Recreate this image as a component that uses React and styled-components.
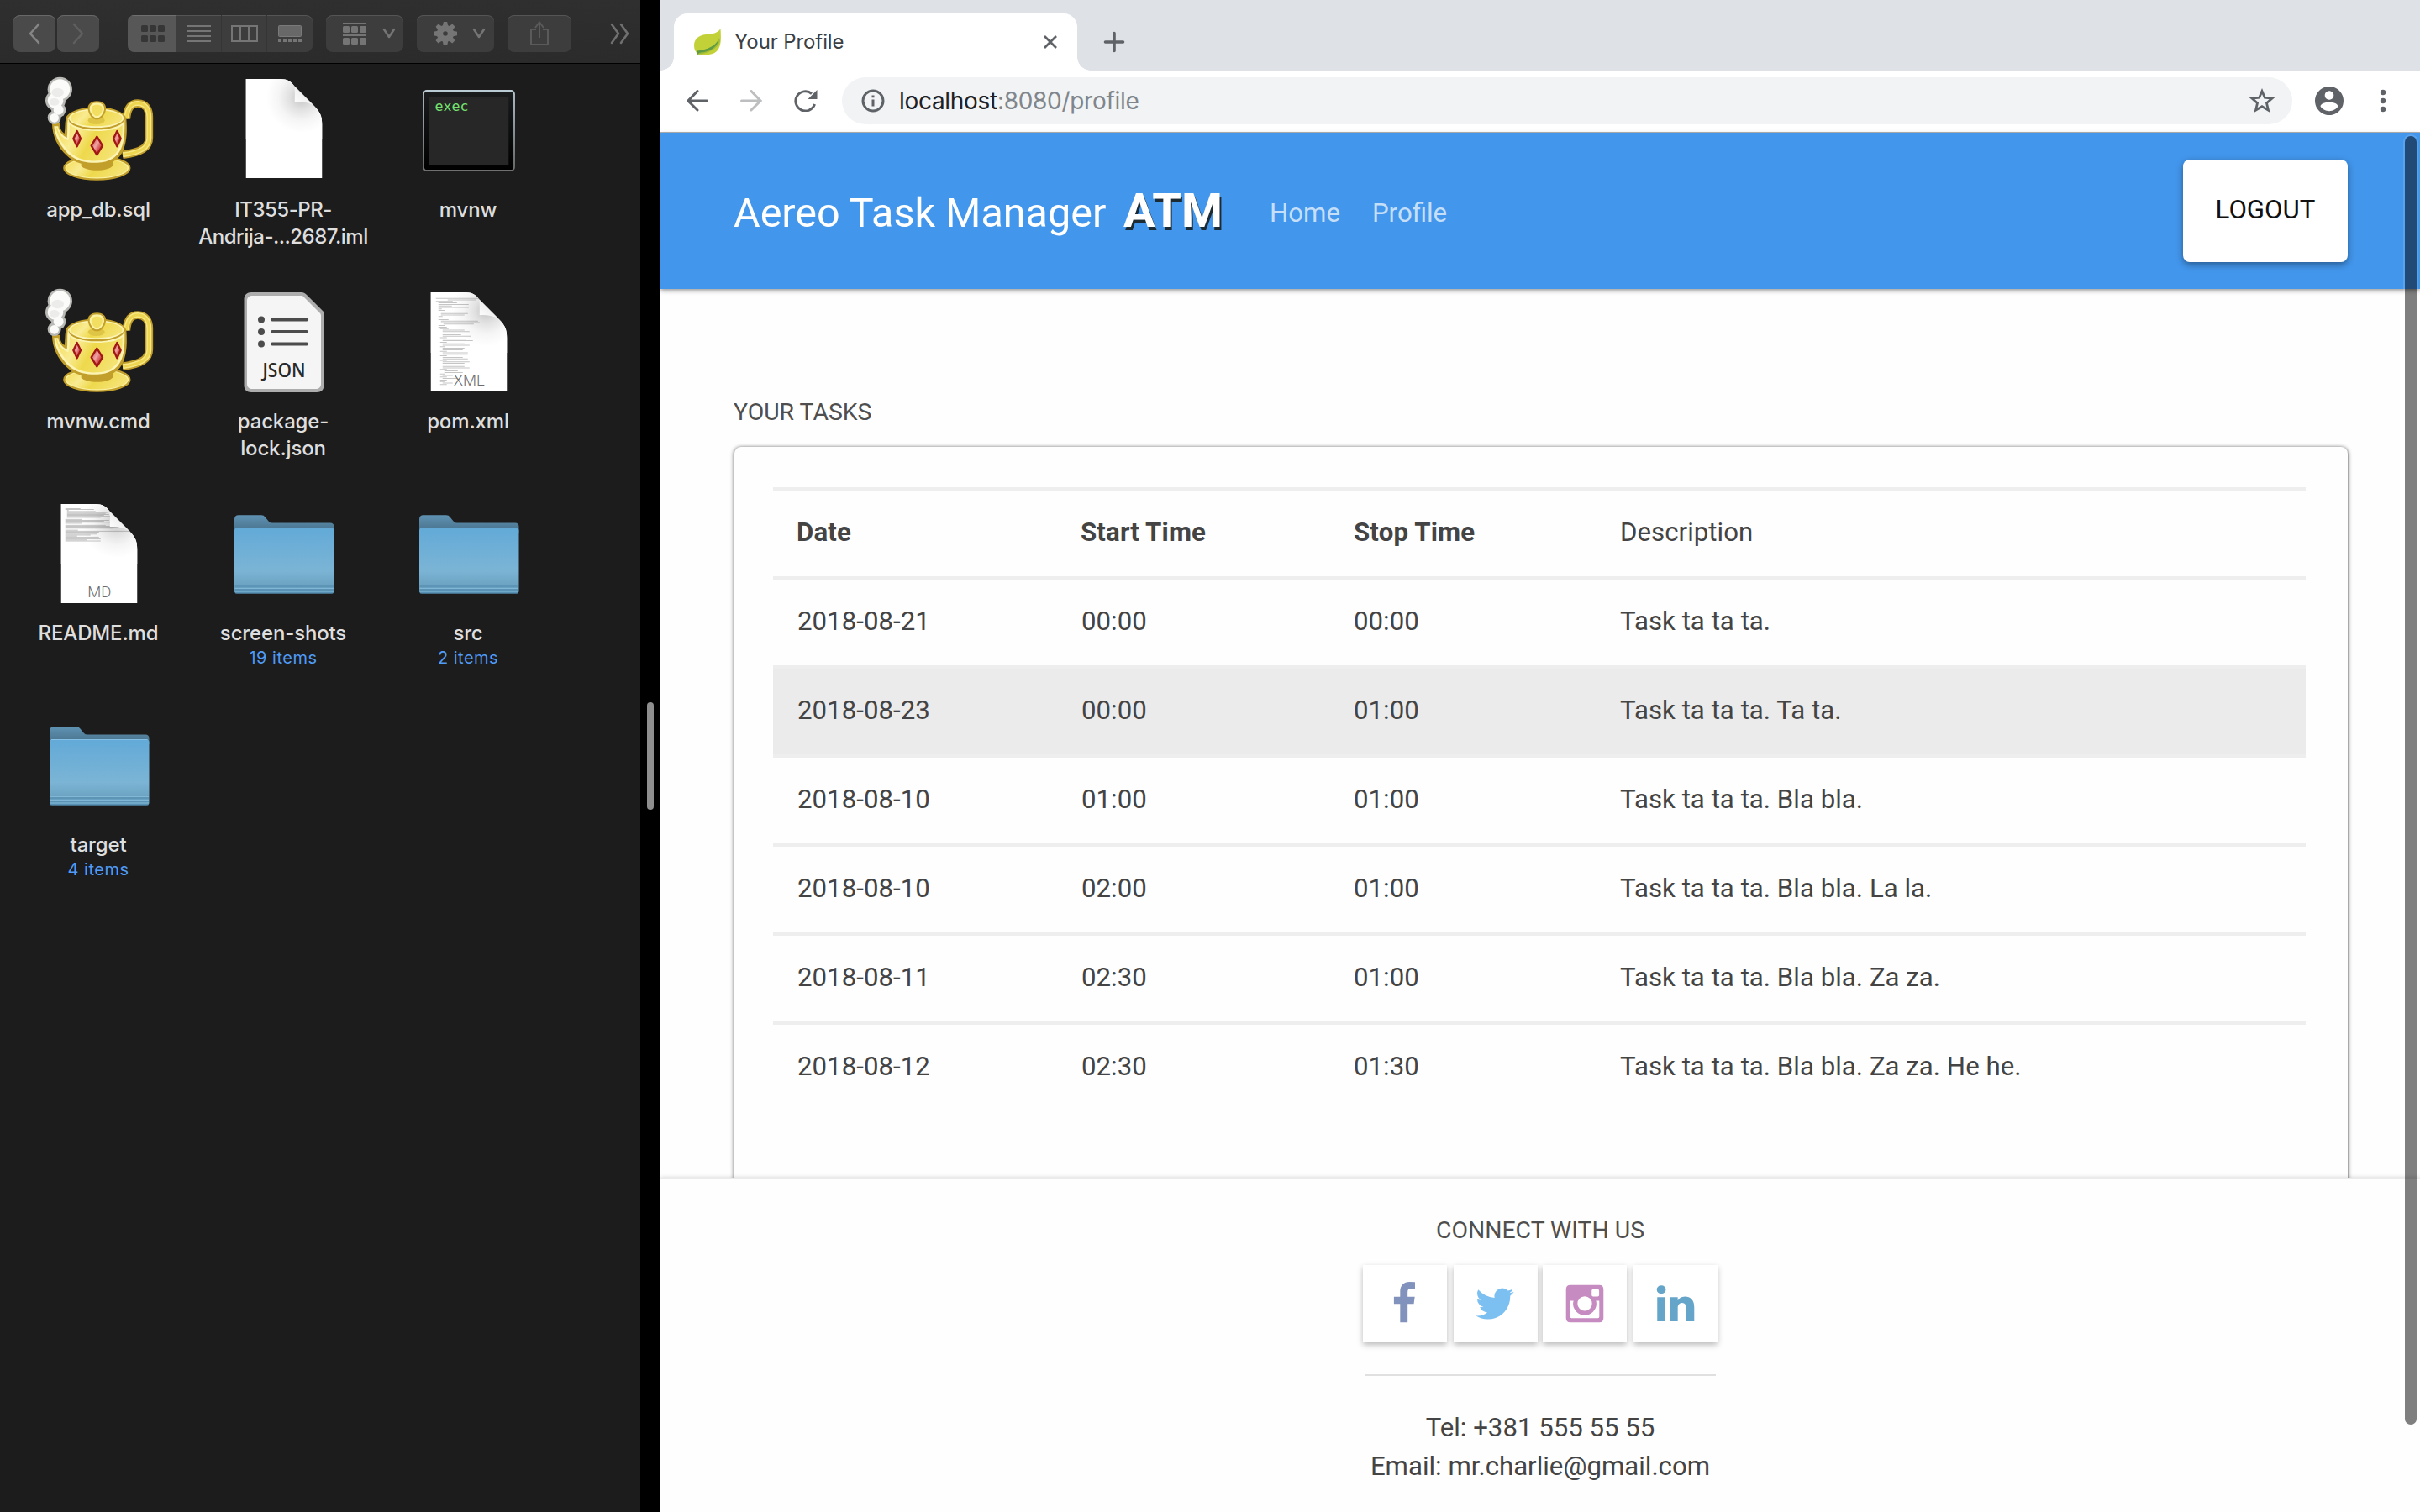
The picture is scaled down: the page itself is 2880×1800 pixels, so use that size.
import React from "react";
import styled, { createGlobalStyle, css } from "styled-components";

const SYSTEM = `Inter, "Liberation Sans", sans-serif`;
const ROBOTO = `Roboto, "Liberation Sans", sans-serif`;

const GlobalStyle = createGlobalStyle`
  *, *::before, *::after { box-sizing: border-box; }
  html, body { margin: 0; padding: 0; background: #000; }
  #root { width: 2880px; height: 1800px; overflow: hidden; }
`;

const Desktop = styled.div`
  display: flex;
  width: 2880px;
  height: 1800px;
  overflow: hidden;
  background: #000;
`;

/* ---------- Finder ---------- */

const Finder = styled.section`
  display: flex;
  flex-direction: column;
  width: 762px;
  background: #1c1c1c;
  font-family: ${SYSTEM};
`;

const FinderToolbar = styled.div`
  display: flex;
  align-items: center;
  height: 76px;
  padding: 5px 0 0 16px;
  background: linear-gradient(#2f2f2f, #2b2b2b);
  border-bottom: 1px solid #000;
`;

const ToolButton = styled.div`
  display: flex;
  align-items: center;
  justify-content: center;
  width: ${(p) => p.$w}px;
  height: 44px;
  margin-left: ${(p) => p.$gap || 0}px;
  padding-left: ${(p) => p.$shift || 0}px;
  border-radius: 8px;
  background: ${(p) => (p.$bright ? "#4a4a4a" : "#3d3d3d")};
  box-shadow: inset 0 1px 0 ${(p) => (p.$bright ? "#686868" : "#555")};
`;

const Segments = styled.div`
  display: flex;
  width: 220px;
  height: 44px;
  margin-left: 34px;
  border-radius: 8px;
  overflow: hidden;
  background: #3d3d3d;
  box-shadow: inset 0 1px 0 #555;
`;

const Segment = styled.div`
  display: flex;
  align-items: center;
  justify-content: center;
  width: ${(p) => p.$w}px;
  border-left: ${(p) => (p.$divider ? "1px solid #353535" : "0")};
  ${(p) =>
    p.$active &&
    css`
      padding-left: 2px;
      background: #575757;
      box-shadow: inset 0 1px 0 #6f6f6f;
    `}
`;

const Overflow = styled.div`
  display: flex;
  margin-left: 45px;
`;

const FileGrid = styled.div`
  display: grid;
  grid-template-columns: repeat(3, 220px);
  grid-auto-rows: 252px;
  padding-left: 7px;
`;

const File = styled.div`
  display: flex;
  flex-direction: column;
  align-items: center;
  padding-top: 4px;
`;

const FileArt = styled.svg`
  display: block;
  width: 150px;
  height: 150px;
  flex: none;
`;

const FileName = styled.div`
  margin-top: 4px;
  font-size: 24px;
  line-height: 32px;
  font-weight: 500;
  letter-spacing: ${(p) => (p.$tight ? -0.5 : -0.15)}px;
  color: #dedede;
  text-align: center;
  white-space: pre;
`;

const FileInfo = styled.div`
  font-size: 20px;
  line-height: 26px;
  letter-spacing: 0.5px;
  color: #4f9bf5;
`;

/* ---------- Split handle ---------- */

const Splitter = styled.div`
  display: flex;
  align-items: center;
  justify-content: center;
  width: 24px;
  background: #000;
`;

const Grip = styled.div`
  width: 8px;
  height: 128px;
  border-radius: 4px;
  background: #8e8e8e;
`;

/* ---------- Browser chrome ---------- */

const Browser = styled.section`
  position: relative;
  display: flex;
  flex-direction: column;
  width: 2094px;
  background: #fff;
`;

const TabStrip = styled.div`
  display: flex;
  align-items: flex-end;
  height: 84px;
  padding-left: 16px;
  background: #dee1e6;
  overflow: hidden;
`;

const Tab = styled.div`
  position: relative;
  display: flex;
  align-items: center;
  width: 480px;
  height: 68px;
  padding: 0 24px;
  border-radius: 16px 16px 0 0;
  background: #fff;
  &::before,
  &::after {
    content: "";
    position: absolute;
    bottom: 0;
    width: 16px;
    height: 16px;
  }
  &::before {
    left: -16px;
    background: radial-gradient(circle at 0 0, transparent 15.5px, #fff 16px);
  }
  &::after {
    right: -16px;
    background: radial-gradient(circle at 100% 0, transparent 15.5px, #fff 16px);
  }
`;

const TabTitle = styled.div`
  flex: 1;
  margin-left: 16px;
  font-family: ${SYSTEM};
  font-size: 24px;
  line-height: 32px;
  letter-spacing: -0.1px;
  color: #3c4043;
`;

const NewTab = styled.svg`
  margin: 0 0 20px 30px;
`;

const AddressRow = styled.div`
  display: flex;
  align-items: center;
  height: 74px;
  padding: 0 33px 2px 31px;
  border-bottom: 1px solid #b3b4b6;
  background: #fff;
`;

const NavIcon = styled.svg`
  flex: none;
  margin-right: ${(p) => p.$after || 0}px;
`;

const Omnibox = styled.div`
  display: flex;
  align-items: center;
  flex: 1;
  height: 56px;
  padding: 0 20px 0 23px;
  border-radius: 28px;
  background: #f1f3f4;
`;

const Url = styled.div`
  flex: 1;
  margin-left: 17px;
  font-family: ${SYSTEM};
  font-size: 28px;
  line-height: 36px;
  letter-spacing: -0.3px;
  color: #80868b;
  span {
    color: #202124;
  }
`;

/* ---------- Page ---------- */

const Page = styled.div`
  display: flex;
  flex-direction: column;
  flex: 1;
  min-height: 0;
  font-family: ${ROBOTO};
  color: #444;
  background: #fefefe;
`;

const Header = styled.header`
  position: relative;
  z-index: 1;
  display: flex;
  align-items: center;
  height: 186px;
  padding: 0 86px 0 87px;
  background: #4296ec;
  box-shadow: 0 2px 5px rgba(0, 0, 0, 0.4);
`;

const Brand = styled.div`
  width: 444px;
  padding-top: 6px;
  font-size: 48.5px;
  line-height: 60px;
  color: #fff;
  white-space: nowrap;
`;

const BrandMark = styled.div`
  width: 118px;
  margin-left: 20px;
  font-size: 56px;
  line-height: 60px;
  font-weight: 700;
  color: #fff;
  text-shadow: 2px 4px 0 #1c2a33;
`;

const Nav = styled.nav`
  display: flex;
  gap: 38px;
  flex: 1;
  margin-left: 56px;
  padding-top: 6px;
`;

const NavLink = styled.a`
  font-size: 31.2px;
  line-height: 40px;
  color: #c6dff9;
`;

const Logout = styled.button`
  width: 196px;
  height: 122px;
  padding: 0 0 2px;
  border: 0;
  border-radius: 8px;
  background: #fff;
  box-shadow: 0 3px 8px rgba(0, 0, 0, 0.4);
  font: 400 31.2px/40px ${ROBOTO};
  color: #111;
`;

const Main = styled.main`
  display: flex;
  flex-direction: column;
  flex: 1;
  min-height: 0;
  padding: 127px 86px 0 87px;
  overflow: hidden;
`;

const Caption = styled.h2`
  margin: 0;
  font-size: 28.4px;
  line-height: 40px;
  font-weight: 400;
  color: #4f4f4f;
`;

const Card = styled.div`
  flex: 1;
  margin: 21px 0 -30px 1px;
  padding: 48px 50px 0 46px;
  border-radius: 8px;
  background: #fefefe;
  box-shadow: 0 1px 5px rgba(0, 0, 0, 0.8);
`;

const Row = styled.div`
  display: grid;
  grid-template-columns: 338px 325px 316px 1fr;
  align-items: center;
  height: 106px;
  border-top: 4px solid #eee;
  background: ${(p) => (p.$hover ? "#ebebeb" : "transparent")};
`;

const Cell = styled.div`
  padding: 0 28px 3px;
  font-size: 31.2px;
  line-height: 48px;
  font-weight: ${(p) => (p.$bold ? 700 : 400)};
  letter-spacing: ${(p) => (p.$bold ? 0.15 : 0.03)}px;
  color: #444;
  white-space: nowrap;
  &:last-child {
    padding-left: 29px;
  }
  &:nth-child(-n + 2) {
    padding-left: ${(p) => (p.$bold ? 28 : 29)}px;
  }
`;

const Footer = styled.footer`
  position: relative;
  display: flex;
  flex-direction: column;
  align-items: center;
  height: 398px;
  padding-top: 41px;
  border-top: 2px solid #ebebeb;
  background: #fefefe;
  box-shadow: 0 0 5px rgba(0, 0, 0, 0.18);
`;

const SocialRow = styled.div`
  display: flex;
  gap: 8px;
  margin-top: 21px;
  & > :nth-child(3) {
    margin-left: -2px;
  }
`;

const Social = styled.a`
  display: flex;
  align-items: center;
  justify-content: center;
  width: 100px;
  height: 92px;
  padding: 0 2px 1px 0;
  background: #fff;
  box-shadow: 0 3px 7px rgba(0, 0, 0, 0.27);
  &:nth-child(n + 3) {
    padding-right: 0;
  }
`;

const Divider = styled.div`
  width: 418px;
  height: 2px;
  margin: 38px 0 39px;
  background: #e0e0e0;
`;

const Contact = styled.div`
  font-size: 31.2px;
  line-height: 46.4px;
  color: #444;
`;

const ScrollThumb = styled.div`
  position: absolute;
  top: 162px;
  right: 4px;
  z-index: 2;
  width: 14px;
  height: 1534px;
  border-radius: 7px;
  background: rgba(0, 0, 0, 0.5);
  box-shadow: 0 0 0 2px rgba(255, 255, 255, 0.12);
`;

/* ---------- File artwork ---------- */

const Teapot = () => (
  <FileArt viewBox="0 0 150 150">
    <defs>
      <linearGradient id="gold" x1="0" x2="1" y1="0" y2="0.3">
        <stop offset="0" stopColor="#f3dc55" />
        <stop offset="0.35" stopColor="#f9eb92" />
        <stop offset="0.6" stopColor="#eed94c" />
        <stop offset="1" stopColor="#f4e272" />
      </linearGradient>
      <linearGradient id="ruby" x1="0" x2="1" y1="0" y2="1">
        <stop offset="0" stopColor="#c32e2e" />
        <stop offset="0.45" stopColor="#f0a5a5" />
        <stop offset="0.7" stopColor="#cf4444" />
        <stop offset="1" stopColor="#b82222" />
      </linearGradient>
    </defs>
    <g transform="translate(2 4) scale(0.33333)" strokeLinejoin="round">
      <g fill="none">
        <path d="M319 172C322 135 334 117 360 117C388 117 400 140 400 165V240C400 275 372 292 306 301" stroke="#c29f2b" strokeWidth="29" />
        <path d="M319 172C322 135 334 117 360 117C388 117 400 140 400 165V240C400 275 372 292 306 301" stroke="#f7e885" strokeWidth="18" />
        <path d="M319 172C322 135 334 117 360 117C388 117 400 140 400 165V240C400 275 372 292 306 301" stroke="#eed650" strokeWidth="9" />
      </g>
      <ellipse cx="214" cy="348" rx="117" ry="41" fill="#fbf2a4" stroke="#c29f2b" strokeWidth="7" />
      <ellipse cx="214" cy="348" rx="109" ry="34" fill="url(#gold)" />
      <path d="M158 322H270V340C258 362 170 362 158 340Z" fill="#c29f2b" />
      <path
        d="M54 188C54 235 76 275 105 302C140 338 190 338 216 337C262 336 294 320 308 285C322 250 322 210 319 172C316 150 270 130 216 130C160 130 112 145 103 170C99 190 101 210 98 225C85 215 82 205 83 188Z"
        fill="#c29f2b"
      />
      <path
        d="M61 199C64 235 84 270 110 296C145 329 190 330 216 329C256 328 286 312 300 280C314 250 313 215 313 178C300 150 262 138 216 138C160 138 118 152 110 172C107 195 110 220 107 240C90 232 77 215 76 199Z"
        fill="#fbf4b4"
      />
      <path
        d="M68 203C74 237 92 266 116 290C148 321 190 323 216 322C252 321 280 305 293 276C305 248 306 220 305 195C290 210 255 216 214 216C170 216 132 208 117 193C116 215 117 235 112 250C92 243 76 225 72 203Z"
        fill="url(#gold)"
      />
      <ellipse cx="212" cy="175" rx="99" ry="36" fill="#c29f2b" />
      <ellipse cx="212" cy="170" rx="98" ry="34" fill="#fbf4b4" />
      <ellipse cx="212" cy="170" rx="93" ry="29" fill="url(#gold)" />
      <ellipse cx="212" cy="178" rx="30" ry="14" fill="#dfc545" />
      <path d="M214 112C235 112 246 124 243 140C240 158 228 172 214 172C200 172 188 158 185 140C182 124 193 112 214 112Z" fill="#fbf2a4" stroke="#c29f2b" strokeWidth="6" />
      <path d="M214 122C228 122 236 130 233 142C230 154 223 163 214 163C205 163 198 154 195 142C192 130 200 122 214 122Z" fill="#f2df62" />
      <g fill="url(#ruby)" stroke="#a31616" strokeWidth="7">
        <path d="M143 216L156 243L143 271L130 243Z" />
        <path d="M214 236L234 268L214 301L194 268Z" />
        <path d="M286 216L299 243L286 271L273 243Z" />
      </g>
      <g fill="#b9b9b5">
        <circle cx="82" cy="67" r="44" />
        <circle cx="66" cy="107" r="36" />
        <circle cx="77" cy="141" r="26" />
        <circle cx="62" cy="168" r="24" />
      </g>
      <g fill="#fbfbfa">
        <circle cx="82" cy="67" r="36" />
        <circle cx="66" cy="107" r="28" />
        <circle cx="77" cy="140" r="18" />
        <circle cx="62" cy="169" r="16" />
      </g>
      <g fill="#ececea">
        <ellipse cx="74" cy="78" rx="22" ry="16" />
        <ellipse cx="62" cy="112" rx="18" ry="13" />
      </g>
    </g>
  </FileArt>
);

/* Greyed source lines on the page preview: [indent, width] pairs. */
const XML_LINES = [
  [6, 28], [6, 52], [20, 34], [6, 20], [9, 22], [9, 36], [9, 16], [9, 36], [9, 4], [9, 8], [12, 24], [12, 32], [12, 28], [9, 5],
  [9, 8], [9, 12], [12, 44], [12, 46], [15, 36], [9, 8], [9, 10], [11, 10], [14, 26], [14, 32], [11, 10], [14, 22], [14, 34],
  [11, 8], [14, 28], [14, 36], [11, 8], [14, 26], [14, 32], [11, 6], [14, 26], [14, 24], [11, 8], [14, 30], [14, 30], [11, 8],
  [14, 24], [14, 30], [11, 8], [14, 32], [14, 26], [11, 8], [14, 26], [14, 32], [11, 8], [16, 16], [16, 22], [11, 6], [14, 12],
  [11, 8], [14, 18], [11, 8], [11, 6], [14, 12], [11, 8], [14, 16],
];
const MD_LINES = [
  [5, 18], [5, 34], [7, 2], [7, 34], [7, 48], [7, 46], [7, 50], [7, 44], [7, 52], [7, 40], [5, 0], [5, 20], [5, 52], [5, 46],
  [5, 54], [5, 20], [5, 0], [5, 48], [5, 62], [5, 64], [5, 56], [5, 0], [5, 15], [5, 76], [5, 40], [5, 0], [5, 38], [5, 30],
  [5, 14], [5, 40], [5, 0], [5, 42], [5, 26], [5, 42],
];

const PageDoc = ({ y = 16, lines = [], step = 1.8, label }) => (
  <FileArt viewBox="0 0 150 150">
    <defs>
      <radialGradient id="curlShade" gradientUnits="userSpaceOnUse" cx="66" cy="22" r="42">
        <stop offset="0" stopColor="#c4c4c4" />
        <stop offset="0.35" stopColor="#e2e2e2" />
        <stop offset="0.65" stopColor="#f5f5f5" />
        <stop offset="1" stopColor="#fff" />
      </radialGradient>
      <linearGradient id="fold" x1="0" x2="1" y1="1" y2="0">
        <stop offset="0" stopColor="#fff" />
        <stop offset="1" stopColor="#e2e2e2" />
      </linearGradient>
    </defs>
    <g transform={`translate(30.75 ${y})`}>
      <path d="M0 0H41C49 0 54 3 58 9L82 33C88 39 90.5 44 90.5 54V118H0Z" fill="#fff" />
      <path d="M0 0H41C49 0 54 3 58 9L82 33C88 39 90.5 44 90.5 54V72H0Z" fill="url(#curlShade)" />
      {lines.map(([x, w], i) => (
        <rect key={i} x={x} y={5 + i * step} width={w} height="0.8" fill="#6d6d6d" opacity="0.5" />
      ))}
      <path d="M57.5 8.5C58.5 14 58 20 58 27C66 26.5 73 27.5 80 31Z" fill="url(#fold)" />
      {label && (
        <text x="45.5" y="111" textAnchor="middle" fontFamily="Roboto, sans-serif" fontWeight="300" fontSize="18.5" fill="#6c6c6c">
          {label}
        </text>
      )}
    </g>
  </FileArt>
);

const JsonDoc = () => (
  <FileArt viewBox="0 0 150 150">
    <path d="M37 16H97C99 16 101 17 103 19L121 37C123 39 123.5 40 123.5 43V127C123.5 132 120 135 115 135H37C32 135 28.5 132 28.5 127V24C28.5 19 32 16 37 16Z" fill="#adadad" />
    <path d="M38 20H96C98 20 99 20.5 100 22L118 40C119.5 41.5 120 42 120 44V125C120 129 117 131 114 131H38C35 131 32 129 32 125V26C32 22 35 20 38 20Z" fill="#f5f5f5" />
    <g fill="#4c4c4c">
      {[48.5, 63, 77.5].map((y) => (
        <React.Fragment key={y}>
          <circle cx="49" cy={y} r="4" />
          <rect x="60" y={y - 2} width="45" height="4" rx="2" />
        </React.Fragment>
      ))}
    </g>
    <text x="76" y="117" textAnchor="middle" fontFamily='"Open Sans", sans-serif' fontWeight="600" fontSize="24" textLength="51" lengthAdjust="spacingAndGlyphs" fill="#2b2b2b">
      JSON
    </text>
  </FileArt>
);

const ExecFile = () => (
  <FileArt viewBox="0 0 150 150">
    <defs>
      <linearGradient id="execEdge" x1="0" x2="0" y1="0" y2="1">
        <stop offset="0" stopColor="#b9ccd6" />
        <stop offset="1" stopColor="#6f6f6f" />
      </linearGradient>
      <linearGradient id="execBody" x1="0" x2="0" y1="0" y2="1">
        <stop offset="0" stopColor="#1a1c1d" />
        <stop offset="1" stopColor="#000" />
      </linearGradient>
    </defs>
    <rect x="22" y="28" width="108" height="95" rx="4" fill="url(#execBody)" stroke="url(#execEdge)" strokeWidth="1.8" />
    <rect x="28.7" y="35" width="94.6" height="81" fill="#272727" />
    <text x="35.5" y="52" fontFamily='"DejaVu Sans Mono", monospace' fontSize="16.6" fill="#74e36e">
      exec
    </text>
  </FileArt>
);

const Folder = () => (
  <FileArt viewBox="0 0 150 150">
    <defs>
      <linearGradient id="folderFront" x1="0" x2="0" y1="0" y2="1">
        <stop offset="0" stopColor="#62aad8" />
        <stop offset="0.65" stopColor="#7bb4d5" />
        <stop offset="0.85" stopColor="#6ea5c5" />
        <stop offset="1" stopColor="#5f99bb" />
      </linearGradient>
      <linearGradient id="folderBack" x1="0" x2="0" y1="0" y2="1">
        <stop offset="0" stopColor="#5f92b2" />
        <stop offset="1" stopColor="#466f89" />
      </linearGradient>
    </defs>
    <path d="M17 50V34Q17 29.3 22 29.3H49Q52 29.3 53.5 31.5L58 37Q59.5 38.5 62 38.5H131Q135.5 38.5 135.5 43V50Z" fill="url(#folderBack)" />
    <path d="M17 48Q17 44 21 44H131.5Q135.5 44 135.5 48V119.5Q135.5 122.5 132.5 122.5H20Q17 122.5 17 119.5Z" fill="url(#folderFront)" />
    <path d="M19 44.5H133.5" stroke="#86c0e4" strokeWidth="1" />
    <g stroke="#85b9d6" strokeWidth="0.9">
      <path d="M17.5 112.5H135M17.5 116.5H135M17.5 120H135" />
    </g>
    <g stroke="#4f86a8" strokeWidth="0.9">
      <path d="M17.5 114H135M17.5 118H135M18 122H134.5" />
    </g>
  </FileArt>
);

/* ---------- Small icons ---------- */

const Chevron = ({ d, w = 14, color = "#8a8a8a" }) => (
  <svg width={w} height="28" viewBox={`0 0 ${w} 28`} fill="none" stroke={color} strokeWidth="2.6" strokeLinecap="round" strokeLinejoin="round">
    <path d={d} />
  </svg>
);

const Squares = ({ x = 0, y = 0 }) => (
  <g transform={`translate(${x} ${y})`}>
    <rect width="8" height="8" rx="1.5" />
    <rect x="10" width="8" height="8" rx="1.5" />
    <rect x="20" width="8" height="8" rx="1.5" />
  </g>
);

const Gear = () => (
  <svg width="28" height="28" viewBox="-14 -14 28 28" fill="#757575">
    {[0, 45, 90, 135, 180, 225, 270, 315].map((a) => (
      <path key={a} d="M-3.4 -8L-2.2 -14H2.2L3.4 -8Z" transform={`rotate(${a})`} />
    ))}
    <circle r="6.5" fill="none" stroke="#757575" strokeWidth="7.4" />
  </svg>
);

const Leaf = () => (
  <svg width="32" height="32" viewBox="0 0 32 32">
    <path d="M31.5 0C28 6 22 6 14 7C5 8 0 13 0 20C0 25 2 28 4 30C12 32 22 32 27 27C33 21 32 10 31.5 0Z" fill="#c3d138" />
    <path d="M30 11C28 20 17 25 4 27C3 28 3.5 30 4 31C17 30 28 24 31 15Z" fill="#9fbb38" />
    <path d="M29 13C26 20 17 25 4 26.5V31C6 28.5 8 28.5 12 28C21 26 28 21 29 13Z" fill="#5f9a45" />
  </svg>
);

const FaGlyph = ({ d, color }) => (
  <svg width="52" height="52" viewBox="0 0 1792 1792" fill={color} fillRule="evenodd">
    <path d={d} />
  </svg>
);

const SOCIALS = [
  {
    color: "#8192bc",
    d: "M1343 12v264h-157q-86 0-116 36t-30 108v189h293l-39 296h-254v759h-306v-759h-255v-296h255v-218q0-186 104-288.5t277-102.5q147 0 228 12z",
  },
  {
    color: "#7cbff1",
    d: "M1684 408q-67 98-162 167 1 14 1 42 0 130-38 259.5t-115.5 248.5-184.5 210.5-258 146-323 54.5q-271 0-496-145 35 4 78 4 225 0 401-138-105-2-188-64.5t-114-159.5q33 5 61 5 43 0 85-11-112-23-185.5-111.5t-73.5-205.5v-4q68 38 146 41-66-44-105-115t-39-154q0-88 44-163 121 149 294.5 238.5t371.5 99.5q-8-38-8-74 0-134 94.5-228.5t228.5-94.5q140 0 236 102 109-21 205-78-37 115-142 178 93-10 186-50z",
  },
  {
    color: "#c68bc0",
    d: "M305 128H1487Q1664 128 1664 305V1487Q1664 1664 1487 1664H305Q128 1664 128 1487V305Q128 128 305 128ZM1240 300Q1180 300 1180 360V540Q1180 600 1240 600H1425Q1485 600 1485 540V360Q1485 300 1425 300ZM896 596A298 298 0 1 0 896 1192A298 298 0 1 0 896 596ZM300 776V1430Q300 1487 357 1487H1435Q1492 1487 1492 1430V776H1355Q1375 835 1375 900A479 465 0 0 1 417 900Q417 835 437 776Z",
  },
  {
    color: "#66a5ca",
    d: "M477 625v991h-330v-991h330zm21-306q1 73-50.5 122t-135.5 49h-2q-82 0-132-49t-50-122q0-74 51.5-122.5t134.5-48.5 133 48.5 51 122.5zm1166 729v568h-329v-530q0-105-40.5-164.5t-126.5-59.5q-63 0-105.5 34.5t-63.5 85.5q-11 30-11 81v553h-329q2-399 2-647t-1-296l-1-48h329v144h-2q20-32 41-56t56.5-52 87-43.5 114.5-15.5q171 0 275 113.5t104 332.5z",
  },
];

const FILES = [
  { name: "app_db.sql", art: <Teapot /> },
  { name: "IT355-PR-\nAndrija-...2687.iml", tight: true, art: <PageDoc y={14} /> },
  { name: "mvnw", art: <ExecFile /> },
  { name: "mvnw.cmd", art: <Teapot /> },
  { name: "package-\nlock.json", art: <JsonDoc /> },
  { name: "pom.xml", art: <PageDoc lines={XML_LINES} step={1.8} label="XML" /> },
  { name: "README.md", art: <PageDoc lines={MD_LINES} step={1.17} label="MD" /> },
  { name: "screen-shots", info: "19 items", art: <Folder /> },
  { name: "src", info: "2 items", art: <Folder /> },
  { name: "target", info: "4 items", art: <Folder /> },
];

const TASKS = [
  ["2018-08-21", "00:00", "00:00", "Task ta ta ta."],
  ["2018-08-23", "00:00", "01:00", "Task ta ta ta. Ta ta."],
  ["2018-08-10", "01:00", "01:00", "Task ta ta ta. Bla bla."],
  ["2018-08-10", "02:00", "01:00", "Task ta ta ta. Bla bla. La la."],
  ["2018-08-11", "02:30", "01:00", "Task ta ta ta. Bla bla. Za za."],
  ["2018-08-12", "02:30", "01:30", "Task ta ta ta. Bla bla. Za za. He he."],
];

function FinderWindow() {
  return (
    <Finder>
      <FinderToolbar>
        <ToolButton $w={50} $bright>
          <Chevron d="M12 3L2 14L12 25" color="#858585" />
        </ToolButton>
        <ToolButton $w={50} $gap={2} $bright>
          <Chevron d="M2 3L12 14L2 25" color="#5f5f5f" />
        </ToolButton>
        <Segments>
          <Segment $w={58} $active>
            <svg width="28" height="20" fill="#363636">
              <Squares />
              <Squares y={12} />
            </svg>
          </Segment>
          <Segment $w={53}>
            <svg width="28" height="20" fill="#757575">
              <path d="M0 0H28V2H0ZM0 6H28V8H0ZM0 12H28V14H0ZM0 18H28V20H0Z" />
            </svg>
          </Segment>
          <Segment $w={54} $divider>
            <svg width="32" height="20" fill="none" stroke="#757575" strokeWidth="2">
              <path d="M1 1H31V19H1ZM11 1V19M21 1V19" />
            </svg>
          </Segment>
          <Segment $w={55} $divider>
            <svg width="28" height="20" fill="#757575">
              <rect x="0.5" y="0.5" width="27" height="13" rx="1" fill="#686868" stroke="#7a7a7a" />
              <path d="M0 16H4V20H0ZM6 16H10V20H6ZM12 16H16V20H12ZM18 16H22V20H18ZM24 16H28V20H24Z" />
            </svg>
          </Segment>
        </Segments>
        <ToolButton $w={92} $gap={16} $shift={10}>
          <svg width="62" height="26" fill="#757575">
            <path d="M0 0H28V2H0ZM0 14H28V16H0Z" />
            <Squares y={4} />
            <Squares y={18} />
            <path d="M49 8L55 17L61 8" fill="none" stroke="#757575" strokeWidth="2.5" strokeLinecap="round" strokeLinejoin="round" />
          </svg>
        </ToolButton>
        <ToolButton $w={92} $gap={16} $shift={10}>
          <Gear />
          <svg width="34" height="26">
            <path d="M20 8L26 17L32 8" fill="none" stroke="#757575" strokeWidth="2.5" strokeLinecap="round" strokeLinejoin="round" />
          </svg>
        </ToolButton>
        <ToolButton $w={76} $gap={16}>
          <svg width="24" height="30" fill="none" stroke="#5a5a5a" strokeWidth="2">
            <path d="M8 10H2V28H22V10H16M12 20V2M7 8L12 1.5L17 8" />
          </svg>
        </ToolButton>
        <Overflow>
          <Chevron w={26} d="M3 3L11 14L3 25M14 3L22 14L14 25" color="#707070" />
        </Overflow>
      </FinderToolbar>
      <FileGrid>
        {FILES.map((f) => (
          <File key={f.name}>
            {f.art}
            <FileName $tight={f.tight}>{f.name}</FileName>
            {f.info && <FileInfo>{f.info}</FileInfo>}
          </File>
        ))}
      </FileGrid>
    </Finder>
  );
}

function BrowserChrome() {
  return (
    <>
      <TabStrip>
        <Tab>
          <Leaf />
          <TabTitle>Your Profile</TabTitle>
          <svg width="16" height="16" stroke="#5f6368" strokeWidth="2.8">
            <path d="M1 1L15 15M15 1L1 15" />
          </svg>
        </Tab>
        <NewTab width="28" height="28" stroke="#5f6368" strokeWidth="3.6" strokeLinecap="round">
          <path d="M14 3.5V24.5M3.5 14H24.5" />
        </NewTab>
      </TabStrip>
      <AddressRow>
        <NavIcon $after={38} width="26" height="26" fill="none" stroke="#5f6368" strokeWidth="3" strokeLinecap="round">
          <path d="M24.5 13H2M13 1.5L1.8 13L13 24" />
        </NavIcon>
        <NavIcon $after={38} width="26" height="26" fill="none" stroke="#bdbec0" strokeWidth="3" strokeLinecap="round">
          <path d="M1.5 13H24M13 1.5L24.2 13L13 24" />
        </NavIcon>
        <NavIcon $after={29} width="28" height="26" fill="none" stroke="#5f6368" strokeWidth="3">
          <path d="M24.5 17A11.6 11.6 0 1 1 21 4.5" />
          <path d="M27.5 0V11H16.5Z" fill="#5f6368" stroke="none" />
        </NavIcon>
        <Omnibox>
          <svg width="28" height="28" fill="none" stroke="#5f6368" strokeWidth="3">
            <circle cx="14" cy="14" r="12" />
            <path d="M14 12.5V20.5M14 7.5V10.3" />
          </svg>
          <Url>
            <span>localhost</span>:8080/profile
          </Url>
          <svg width="32" height="32" viewBox="0 0 32 32" fill="none" stroke="#5f6368" strokeWidth="2.8">
            <path d="M16 4.5L19.3 12.2L28 13L21.5 18.7L23.5 27.2L16 22.7L8.5 27.2L10.5 18.7L4 13L12.7 12.2Z" />
          </svg>
        </Omnibox>
        <NavIcon width="88" height="34" fill="#5f6368">
          <path
            fillRule="evenodd"
            d="M44 0A17 17 0 1 1 43.99 0ZM44 5.2A5.3 5.3 0 1 0 44.01 5.2ZM44 18.5C38.5 18.5 33.5 21 33.5 23.6C35.5 27 39.5 29.2 44 29.2C48.5 29.2 52.5 27 54.5 23.6C54.5 21 49.5 18.5 44 18.5Z"
          />
        </NavIcon>
        <NavIcon width="31" height="34" fill="#5f6368">
          <circle cx="20" cy="7" r="3.2" />
          <circle cx="20" cy="17" r="3.2" />
          <circle cx="20" cy="27" r="3.2" />
        </NavIcon>
      </AddressRow>
    </>
  );
}

function ProfilePage() {
  return (
    <Page>
      <Header>
        <Brand>Aereo Task Manager</Brand>
        <BrandMark>ATM</BrandMark>
        <Nav>
          <NavLink>Home</NavLink>
          <NavLink>Profile</NavLink>
        </Nav>
        <Logout>LOGOUT</Logout>
      </Header>
      <Main>
        <Caption>YOUR TASKS</Caption>
        <Card>
          <Row>
            <Cell $bold>Date</Cell>
            <Cell $bold>Start Time</Cell>
            <Cell $bold>Stop Time</Cell>
            <Cell>Description</Cell>
          </Row>
          {TASKS.map((task, i) => (
            <Row key={i} $hover={i === 1}>
              {task.map((value, j) => (
                <Cell key={j}>{value}</Cell>
              ))}
            </Row>
          ))}
        </Card>
      </Main>
      <Footer>
        <Caption>CONNECT WITH US</Caption>
        <SocialRow>
          {SOCIALS.map((s) => (
            <Social key={s.color}>
              <FaGlyph d={s.d} color={s.color} />
            </Social>
          ))}
        </SocialRow>
        <Divider />
        <Contact>Tel: +381 555 55 55</Contact>
        <Contact>Email: mr.charlie@gmail.com</Contact>
      </Footer>
    </Page>
  );
}

export default function App() {
  return (
    <>
      <GlobalStyle />
      <Desktop>
        <FinderWindow />
        <Splitter>
          <Grip />
        </Splitter>
        <Browser>
          <BrowserChrome />
          <ProfilePage />
          <ScrollThumb />
        </Browser>
      </Desktop>
    </>
  );
}
